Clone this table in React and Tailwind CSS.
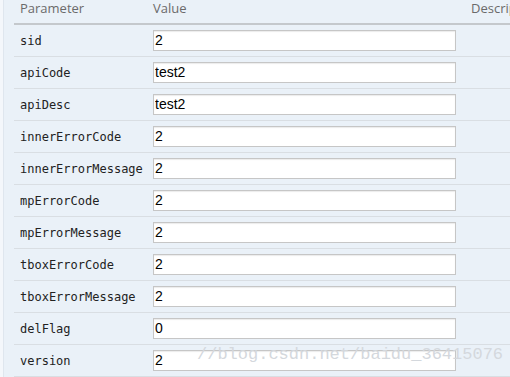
import React from 'react';

const rows = [
  ['sid', '2'],
  ['apiCode', 'test2'],
  ['apiDesc', 'test2'],
  ['innerErrorCode', '2'],
  ['innerErrorMessage', '2'],
  ['mpErrorCode', '2'],
  ['mpErrorMessage', '2'],
  ['tboxErrorCode', '2'],
  ['tboxErrorMessage', '2'],
  ['delFlag', '0'],
  ['version', '2'],
];

const App = () => {
  return (
    <div className="relative h-[377px] w-[510px] overflow-hidden bg-[#eaf1f8] flex">
      {/* left edge strip */}
      <div className="w-[4px] shrink-0 bg-[#f4f7fb] border-r border-[#dfe6ee]" />
      <div className="ml-[10px] flex-1 min-w-0">
        {/* header */}
        <div className="h-[25px] border-b-2 border-[#c4c8cc] flex items-start text-[13px] leading-[16px] text-[#6a6a6a] font-['Open_Sans',sans-serif]">
          <div className="w-[139px] pl-[6px] shrink-0">Parameter</div>
          <div className="w-[318px] shrink-0">Value</div>
          <div className="whitespace-nowrap">Description</div>
        </div>
        {rows.map(([name, value]) => (
          <div key={name} className="h-[32px] border-b border-[#d9dee3] flex items-center">
            <div className="w-[139px] pl-[6px] shrink-0 font-['DejaVu_Sans_Mono',monospace] text-[12px] text-[#222]">
              {name}
            </div>
            <input
              readOnly
              value={value}
              className="w-[303px] h-[21px] bg-white border border-[#c6c6c6] shadow-[inset_0_1px_1px_rgba(0,0,0,0.08)] px-[1px] font-['Liberation_Sans',Arial,sans-serif] text-[14px] text-black outline-none"
            />
          </div>
        ))}
      </div>
      {/* watermark */}
      <div className="absolute left-[197px] top-[345px] font-['Liberation_Mono',monospace] text-[17px] leading-[20px] text-[#d4d8dd] pointer-events-none whitespace-nowrap">
        //blog.csdn.net/baidu_36415076
      </div>
    </div>
  );
};

export default App;
